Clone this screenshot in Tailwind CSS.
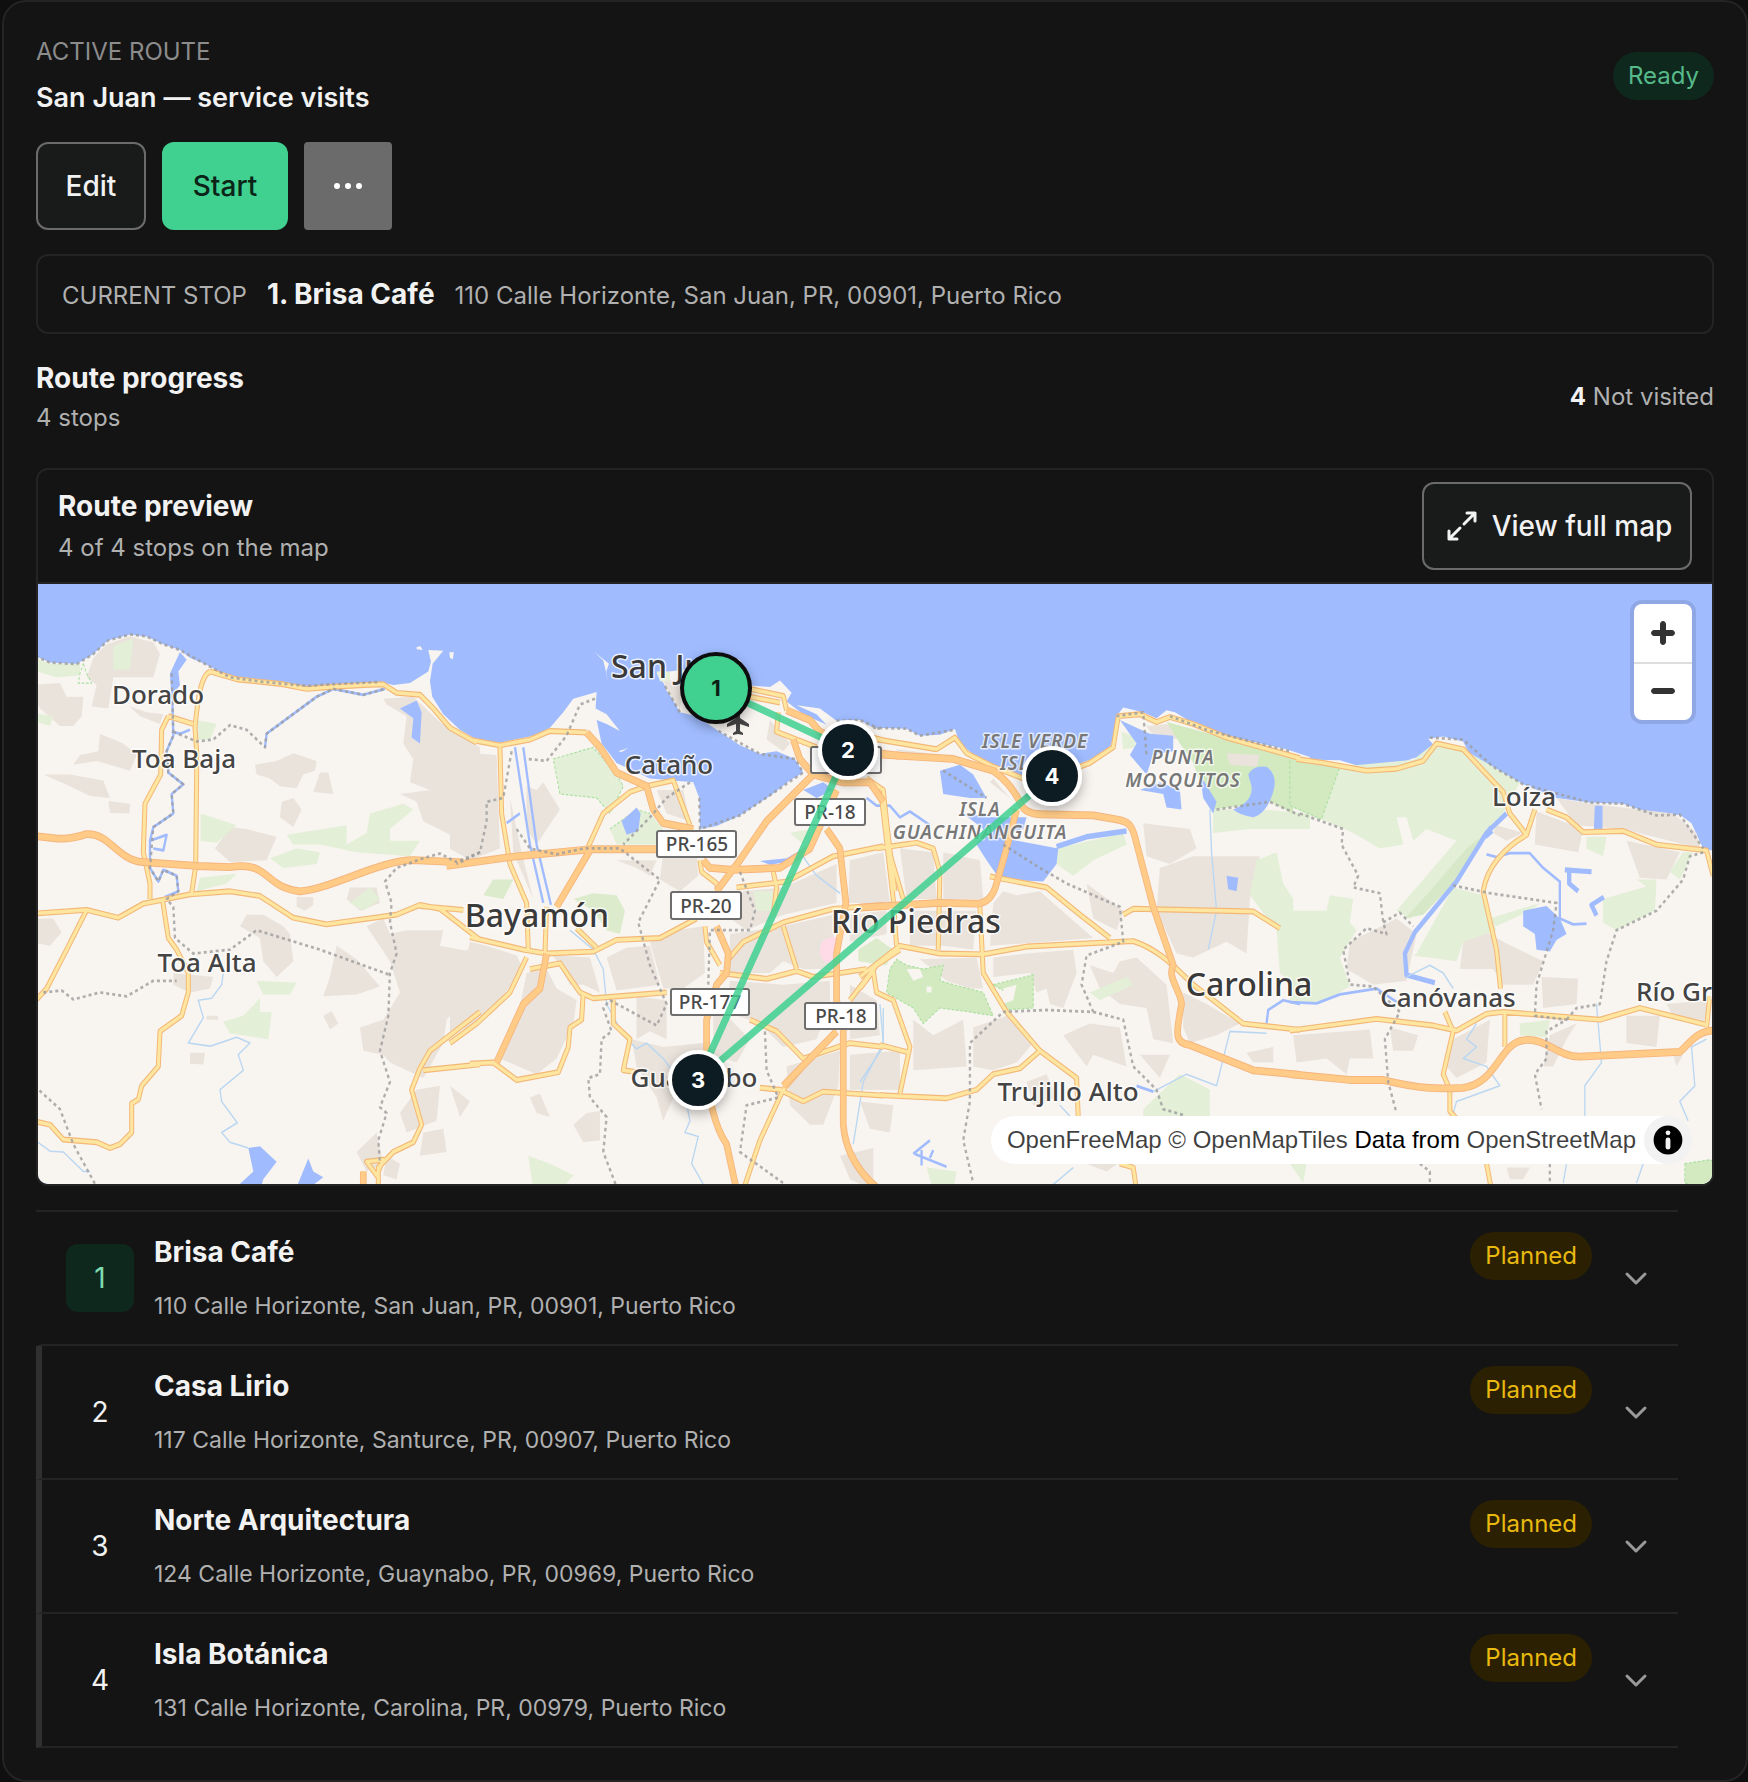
<!DOCTYPE html>
<html lang="en">
<head>
<meta charset="utf-8">
<meta name="viewport" content="width=device-width, initial-scale=1">
<title>San Juan — service visits</title>
<script src="https://cdn.jsdelivr.net/npm/@tailwindcss/browser@4"></script>
</head>
<body class="bg-[#0f0f0f] pl-[2px] font-['Inter','Liberation_Sans',sans-serif] text-[#f2f2f2]">
<main class="rounded-3xl border-2 border-[#242424] bg-[#141414] px-8 pt-[34px] pb-8">

  <header class="flex items-center justify-between">
    <div>
      <p class="text-[24px] leading-8 text-[#8c8c8c]">ACTIVE ROUTE</p>
      <h1 class="mt-3 text-[27px] leading-9 font-semibold">San Juan — service visits</h1>
    </div>
    <span class="rounded-full bg-[#0f281d] px-[15px] text-[24px] leading-[48px] text-[#56b98a]">Ready</span>
  </header>

  <div class="mt-[26px] flex gap-4">
    <button type="button" class="h-[88px] w-[110px] rounded-xl border-2 border-[#6b6b6b] bg-[#191b1b] text-[28px] font-medium">Edit</button>
    <button type="button" class="h-[88px] w-[126px] rounded-xl bg-[#40d090] text-[28px] font-medium text-[#0b2417]">Start</button>
    <button type="button" aria-label="More actions" class="flex size-[88px] items-center justify-center rounded bg-[#6b6b6b]">
      <svg class="h-2 w-7" viewBox="0 0 28 8" fill="#fff"><circle cx="3" cy="4" r="3"/><circle cx="14" cy="4" r="3"/><circle cx="25" cy="4" r="3"/></svg>
    </button>
  </div>

  <section aria-label="Current stop" class="mt-6 flex h-20 items-center rounded-xl border-2 border-[#242424] px-6">
    <div class="flex items-baseline gap-5">
      <span class="text-[24px] leading-8 text-[#b0b0b0]">CURRENT STOP</span>
      <strong class="text-[28px] leading-9 font-bold">1. Brisa Café</strong>
      <span class="text-[24px] leading-8 text-[#b0b0b0]">110 Calle Horizonte, San Juan, PR, 00901, Puerto Rico</span>
    </div>
  </section>

  <section class="mt-[26px] flex items-center justify-between">
    <div>
      <h2 class="text-[28px] leading-9 font-bold">Route progress</h2>
      <p class="mt-1.5 text-[24px] leading-8 text-[#b0b0b0]">4 stops</p>
    </div>
    <p class="text-[24px] leading-8 text-[#b0b0b0]"><strong class="font-bold text-[#f2f2f2]">4</strong> Not visited</p>
  </section>

  <section class="mt-[34px] overflow-hidden rounded-xl border-2 border-[#242424]">
    <div class="flex items-center justify-between border-b-2 border-[#242424] px-5 py-3">
      <div>
        <h2 class="text-[28px] leading-9 font-bold">Route preview</h2>
        <p class="mt-2 text-[24px] leading-8 text-[#b0b0b0]">4 of 4 stops on the map</p>
      </div>
      <button type="button" class="flex h-[88px] w-[270px] items-center justify-center gap-3.5 rounded-xl border-2 border-[#6b6b6b] bg-[#191b1b] pl-1 text-[28px] font-medium">
        <svg class="size-8" viewBox="0 0 32 32" fill="none" stroke="#f2f2f2" stroke-width="3" stroke-linecap="round" stroke-linejoin="round"><path d="M21 3h8v8M29 3 18 14M11 29H3v-8M3 29l11-11"/></svg>
        View full map
      </button>
    </div>

    <div class="relative h-[600px] overflow-hidden bg-[#a0bcff]">
      <svg class="block h-full w-full" viewBox="0 0 1674 600" preserveAspectRatio="xMidYMid slice" role="img" aria-label="Route map around San Juan">
        <defs>
          <filter id="markerShadow" x="-50%" y="-50%" width="200%" height="200%"><feDropShadow dx="0" dy="4" stdDeviation="6" flood-color="#000" flood-opacity=".3"/></filter>
          <g id="highways">
            <g>
              <path d="M0,658C60,658 90,676 170,653C240,650 260,720 340,725L500,735 600,738C720,720 700,790 810,800C900,795 1050,720 1150,720L1300,726"/>
              <path d="M1000,1520V1568"/>
            </g>
            <g transform="translate(1260 0)">
              <path d="M-10,735 200,710 420,692 620,692M410,392 450,430 500,495 590,530 610,590 640,625 730,640M320,840 420,695M290,960 270,1050 220,1090 140,1240"/>
              <path d="M1090,500 950,620 870,720 800,800M760,720 780,740 850,745 990,740 1080,690 1160,540M1010,335 1080,360 1110,390 1240,440 1350,452M1030,410 1050,460 1090,500 1180,520 1260,520 1300,570"/>
              <path d="M1130,640 1170,690 1188,830 1160,960 1160,1080 1180,1150 1180,1400Q1190,1500 1290,1568M800,890 835,960 830,1010 800,1040 770,1130 770,1230Q775,1380 830,1450L860,1568M1160,1160 1000,1300"/>
            </g>
            <g transform="translate(2490 0)">
              <path d="M50,448 280,460 400,490Q450,520 480,570 490,600 540,602L700,605C790,620 810,610 825,660L880,840 940,990C920,1020 965,1060 965,1090C950,1160 940,1190 990,1195L1180,1260 1320,1272"/>
              <path d="M470,590 440,690 410,780Q395,830 350,832L240,830 0,842"/>
            </g>
            <g transform="translate(3780 0)">
              <path d="M0,1270 180,1285 280,1285C400,1310 450,1308 520,1305C620,1295 630,1190 700,1183C770,1175 800,1225 870,1225L1170,1213C1200,1190 1220,1160 1270,1158"/>
            </g>
          </g>
          <g id="roads">
            <g>
              <path d="M540,235C515,245 505,290 495,380L500,440 500,500 497,735 485,805M540,235 620,255 760,268 830,280 900,275 1000,270 1060,268 1100,290 1170,295 1210,330 1260,380 1340,418"/>
              <path d="M0,858 170,848 265,868 340,832 480,808 600,800 690,812 790,868 890,885 1100,860 1170,835 1230,845 1290,885 1350,925M1170,838 1300,848M415,350 490,370M415,350 395,385 392,500 345,575 340,700 360,780 360,820"/>
              <path d="M170,848 110,950 50,1050 20,1078M398,825 415,920 440,950 475,1010 475,1060 455,1120 390,1160 385,1250 335,1300 325,1335 305,1345 305,1420 270,1450 240,1460 200,1445 100,1438 60,1400 0,1388"/>
              <path d="M1350,1110 1200,1210 1170,1255 1145,1310 1175,1400 1150,1445 1090,1470 1045,1510 1045,1568M1180,1260 1350,1245M1010,1495 1060,1490 1040,1530Z"/>
            </g>
            <g transform="translate(1260 0)">
              <path d="M70,412 150,425 240,410 300,388 410,392M150,430 155,600 180,730 230,830 235,950M410,695 460,600 540,545 590,530 670,515 720,630M60,918 220,950 290,960 430,955 500,925 630,920 740,870"/>
              <path d="M290,840 285,960M380,895 440,945M230,970 180,1060 80,1140 0,1190M240,1000 330,985 390,1060 430,1075 650,1060M400,1060 395,1130 360,1150 355,1200 325,1265 200,1285 130,1240 60,1243"/>
              <path d="M490,1080 490,1140 540,1180 520,1260 560,1265M750,720 755,750 800,780 805,810M860,790 1010,775 1150,710 1300,684M765,890 770,930 810,990M830,980 880,930 1000,880 1150,845 1300,835M970,750 980,790 970,860M1000,890 1040,1000"/>
              <path d="M810,1010 950,1025 1040,1005 1090,1020 1250,1000M900,1130 980,1160 1060,1230 1200,1190 1300,1200M930,1305 990,1310 1060,1340 1120,1315 1300,1325M1090,1220 1000,1310 930,1440 880,1568M1250,510 1300,540 1310,620 1335,800M1200,1080 1280,990 1350,950"/>
              <path d="M1270,405 1300,412M900,280 1000,298 1010,335M900,300 990,315M985,340 980,390 1100,430"/>
            </g>
            <g transform="translate(2490 0)">
              <path d="M40,408 230,435 285,405 320,445 400,480 490,510 600,500 690,470 760,430 775,350 840,345 890,365 930,352 1000,370 1100,405 1320,458M20,510 65,560 100,820 110,940M85,690 130,820M50,690 170,675 220,690 240,750 235,950"/>
              <path d="M390,762 560,790 660,860 750,920M360,840 370,1010 440,1110 540,1210 650,1280 655,1378M0,1020 120,940 240,960 370,962 500,942 820,928C900,950 950,1000 1000,1040L1150,1140 1320,1156"/>
              <path d="M790,860 820,845 1180,852 1260,895M540,1210 480,1255 400,1270 350,1310 260,1332 60,1324M60,1195 150,1215M0,1050 40,1005 50,1060 100,1080 150,1200 120,1320M780,1500 820,1510 830,1568"/>
            </g>
            <g transform="translate(3780 0)">
              <path d="M20,460 100,470 230,490 320,485 400,465 440,420 520,435 640,545 660,600 710,655M735,590 710,655C640,690 590,740 580,800L620,950 632,1050M770,590 830,610 880,648 1000,645 1100,680 1250,695 1270,760"/>
              <path d="M0,1158 200,1135 260,1128 430,1145 500,1158 590,1115 640,1110 930,1130 1050,1100 1250,1143M645,1110 645,1200M465,1110 490,1160 460,1270 480,1310 480,1365 500,1385M1250,1150 1260,1070M590,1500 605,1568"/>
            </g>
          </g>
        </defs>

        <!-- survey grid: geometry units are a third of a pixel wide -->
        <g transform="translate(-8 -4) scale(.3333 .3891)" stroke-linejoin="round">
          <!-- land -->
          <g fill="#f8f4f0">
            <path d="M0,190 60,212 140,216 190,190 235,155 300,140 350,145 400,165 450,180 480,200 530,218 600,250 700,262 830,275 900,270 1050,262 1090,270 1140,265 1195,235 1203,210 1195,180 1240,182 1208,215 1200,260 1207,300 1240,345 1290,385 1350,415V1568H0ZM1160,172l12,-2 6,10-18,-2ZM1258,186l14,0-4,18-8,-4Z"/>
            <path transform="translate(1260 0)" d="M0,378 70,410 150,418 250,400 300,380 340,340 370,305 440,288 437,330 470,345 510,388 470,370 440,360 455,420 500,470 600,510 730,520 748,560 750,640 800,632 870,605 960,555 1020,515 1060,495 1035,460 980,440 930,447 870,425 800,385 740,350 690,340 670,310 640,265 620,240 700,230 880,270 960,275 990,258 1025,290 1010,312 1060,345 1130,372 1100,345 1040,322 1110,330 1160,362 1230,360 1270,380 1350,383V1568H0ZM432,184l20,14 25,17-8,20 5,30-6,-30-8,-28ZM505,440l30,-8-20,10Z"/>
            <path transform="translate(2490 0)" d="M20,372 40,380 140,382 180,400 240,398 285,383 300,420 350,455 420,485 490,505 600,490 690,462 750,430 765,395 770,350 790,328 850,340 890,355 920,335 945,340 980,358 1050,388 1150,410 1280,435 1350,455V1568H0Z"/>
            <path transform="translate(3780 0)" d="M0,450 80,462 150,463 220,482 300,480 370,458 420,450 432,425 415,408 460,402 520,415 540,450 610,485 700,525 800,560 900,572 1000,575 1100,605 1170,603 1205,625 1240,690 1290,700V1568H0Z"/>
          </g>
          <!-- built-up areas -->
          <g fill="#eae3dc">
            <path d="M230,165 300,145 370,160 390,190 370,250 250,250 235,330 185,325 200,270 170,250 190,200ZM0,270 90,265 110,300 160,300 155,350 130,375 90,375 30,330ZM210,395 280,420 320,450 300,490 200,465 130,475 150,450 205,440ZM40,500 120,500 220,515 240,560 180,555 120,530ZM235,568 300,575 298,600 240,598ZM300,325 350,340 400,345 390,370 330,350ZM675,475 740,465 790,445 860,465 855,490 820,500 800,535 750,530 720,510 680,500ZM870,495 895,495 910,550 850,545ZM755,570 790,560 815,590 790,635 750,610ZM600,635 650,640 740,660 710,720 600,725 555,690Z"/>
            <path d="M1060,305 1150,300 1230,365 1350,430V700L1250,650 1180,620 1160,570 1110,550 1200,540 1140,520 1150,460 1120,420 1130,350 1070,320ZM650,860 700,860 760,890 780,910 790,980 740,1020 700,980 690,920 630,890ZM920,940 980,975 1050,1045 980,1065 880,1070 900,1020ZM1010,890 1060,870 1080,910 1130,900 1240,900 1230,940 1350,960V1100L1290,1090 1250,1130 1240,1190 1180,1280 1080,1240 1060,1220 1000,1210 990,1150 1060,1130 1110,1060 1080,980ZM880,1120 905,1108 925,1140 900,1155ZM1160,1310 1230,1300 1220,1390 1130,1420 1110,1370ZM1180,1420 1240,1410 1250,1470 1170,1480ZM0,870 70,870 95,905 60,940 0,930ZM430,1010 550,1020 540,1050 480,1060 430,1040ZM480,1215 525,1215 520,1245 480,1243ZM980,1470 1040,1420 1060,1500 1010,1520ZM960,790 1040,790 1050,830 990,850 950,820ZM1070,1480 1110,1500 1100,1540 1060,1530ZM530,1120h34v10h-34ZM800,815h50v20l-25,15-25,-10Z"/>
            <g transform="translate(1260 0)">
              <path d="M0,440 140,450 150,690 60,720 0,690ZM60,930 110,940 200,965 220,1000 150,1080 60,1150 0,1160ZM230,1010 290,1000 320,1050 380,1080 370,1140 320,1230 260,1270 150,1230 200,1140ZM310,965 420,970 450,1060 400,1040 360,1040ZM470,970 530,945 600,940 630,1040 500,1055ZM600,930 680,900 760,890 765,1010 700,1050 640,1050 620,990ZM840,910 1000,890 1150,860 1155,1000 1060,1000 1000,980 960,1010 840,1010ZM880,800 1000,790 1160,730 1160,830 1000,860 890,900 840,870ZM1200,720 1300,700 1320,830 1195,830Z"/>
              <path d="M840,1030 1000,1040 1140,1030 1140,1090 1100,1180 1000,1200 930,1140 830,1110ZM1010,1250 1090,1230 1170,1210 1165,1300 1120,1400 1080,1400 1020,1350ZM1200,1220 1350,1210V1310H1200ZM560,1070 650,1080 650,1180 600,1160 560,1180ZM545,1180 640,1200 760,1190 750,1300 680,1310 640,1390 620,1330 560,1250ZM370,1400 410,1370 450,1365V1440L400,1445ZM240,1330 270,1320 300,1380 260,1370ZM640,250 700,270 690,330 650,285ZM960,360 1020,420 1000,440 950,410ZM230,530 260,540 280,520 330,590 260,680 230,640ZM1170,1480 1270,1460V1568L1200,1540ZM620,540 700,540 720,620 650,600ZM0,1300 60,1340 30,1380ZM500,720 620,720 600,760 560,740ZM1200,1040 1280,1080 1290,1170 1200,1180ZM1200,860 1310,850V910L1200,930ZM0,960 60,950V1140L0,1160ZM790,1080 830,1120 900,1180 860,1240 790,1220ZM640,700 740,700 745,760 690,800 630,770ZM180,560 215,700 250,820 190,700Z"/>
            </g>
            <g transform="translate(2490 0)">
              <path d="M110,435 250,450 240,465 110,450ZM120,690 220,700 230,820 140,820ZM250,700 360,720 370,820 250,820ZM150,850 350,850 340,950 250,940 150,940ZM430,800 470,810 540,800 620,860 700,920 560,930 390,940 400,830ZM180,975 350,970 370,1050 330,1050 260,1030ZM400,970 500,960 640,950 650,1010 610,1100 570,1090 560,1050 530,1060 510,1010 400,1020ZM680,780 790,850 770,900 700,870ZM850,625 990,640 1010,690 930,730 860,710ZM900,740 1000,710 1200,710 1170,820 1160,960 1100,930 1000,970 950,960 890,850ZM690,990 760,1010 780,980 830,970 920,1040 940,1190 880,1180 860,1100 780,1090 720,1050Z"/>
              <path d="M160,1130 220,1170 310,1130 320,1250 160,1260ZM340,1150 440,1120 520,1190 470,1240 400,1260 340,1250ZM610,1170 690,1140 780,1150 800,1250 700,1220 680,1250ZM20,1240 120,1230V1310H20ZM0,1340 100,1350 90,1420 30,1410ZM860,375 930,370 1010,400 960,410 880,400ZM970,1060 1040,1090 1140,1140 1070,1170 990,1190 970,1150ZM740,1450 790,1490 740,1520 680,1500ZM1160,1215 1240,1200 1240,1240 1180,1240ZM400,510 450,560 390,520ZM840,1220 930,1220 900,1280ZM500,1290 560,1270 590,1330 520,1350Z"/>
            </g>
            <g transform="translate(3780 0)">
              <path d="M740,595 880,640 865,700 735,680ZM800,560 900,575 1150,600 1220,650 1230,690 1000,640 860,630ZM1010,670 1170,700 1130,770 1050,765ZM520,930 570,895 640,930 760,980 730,1040 640,1040 610,1000 510,1000ZM180,930 250,900 320,870 380,910 350,1030 250,1040 170,1000ZM755,1020 865,1025 860,1090 760,1100ZM10,1170 240,1155 250,1230 180,1230 170,1270 110,1230 20,1240ZM300,1150 385,1170 370,1210 310,1210ZM490,1180 600,1130 590,1240 500,1280 470,1250ZM1010,1120 1110,1120 1100,1200 1010,1190ZM620,630 700,650 650,670 610,650ZM780,1170 860,1140 830,1180 790,1250 760,1250ZM1130,1090 1260,1080 1240,1140 1150,1120ZM650,1510 720,1510 700,1540 660,1540ZM1150,1220h30l-20,30Z"/>
            </g>
          </g>
          <!-- vegetation -->
          <g fill="#e3efd6">
            <path d="M0,195 60,215 150,215 150,245 80,250 0,230ZM250,170 310,150 300,230 250,230ZM500,360 560,370 540,410 500,410ZM512,600 620,630 560,675 512,670ZM720,715 800,690 870,700 860,730 760,740ZM770,655 950,630 950,680 1010,650 1020,600 1120,575 1150,590 1080,640 1080,670 1170,670 1140,710 980,700 870,680 790,680ZM510,765 620,755 590,780 500,800ZM680,1030 800,1035 780,1065 700,1065ZM580,1135 640,1120 690,1075 690,1110 725,1110 715,1180 600,1165ZM960,830 1020,790 1050,820 1000,850ZM0,340 70,350 60,375 0,360Z"/>
            <g transform="translate(1260 0)"><path d="M310,460 430,430 500,500 520,530 480,600 440,560 330,550ZM480,640 560,590 600,600 640,640 620,680 500,680ZM235,1480 300,1500 370,1530 340,1560 250,1568ZM910,800 970,800 970,850 920,850ZM1020,650 1080,640 1060,680ZM620,235h40v25h-30Z"/></g>
            <g transform="translate(2490 0)"><path d="M1060,590 1200,590 1350,600V640L1170,640 1060,650ZM590,690 790,650 800,680 700,720 640,760 590,730ZM1190,720 1250,700 1270,780 1300,820V1040L1260,1010 1250,900 1170,810ZM690,1060 800,1020 820,1040 720,1080ZM850,1360 960,1270 1050,1310 1050,1378H850ZM200,1510 290,1520 280,1568H220ZM785,390 820,400 830,430 790,435Z"/></g>
            <g transform="translate(3780 0)"><path d="M150,480 370,462 440,415 530,440 690,520 640,600 500,770 360,870 320,850 500,670 410,640 370,670 350,610 320,610 340,680 270,690 190,650 95,615ZM380,960 490,790 580,810 620,900 520,930 500,980 370,965ZM0,850 110,850 120,810 190,820 180,880 200,900 150,970 180,1045 90,1090 0,1080ZM600,870 750,830 720,850 620,890ZM940,820 1100,780 1095,850 980,900 940,880ZM1180,700 1210,700 1170,770 1140,750ZM890,660 950,660 940,710 890,690ZM690,1140 780,1130 770,1175 690,1170ZM0,1500 50,1500 40,1550ZM1040,770h60l-10,30Z"/></g>
          </g>
          <g fill="#d3eac0" stroke="#a9e0a0" stroke-width="3" stroke-dasharray="8 5">
            <path d="M160,215 170,240 185,265 145,265 150,240Z" fill="none"/>
            <g transform="translate(1260 0)"><path fill="none" d="M310,460 430,430 500,500 520,530 480,600 440,560 330,550ZM480,640 560,590 600,600"/><path stroke="none" fill="#dcebcb" d="M100,810 130,770 190,770 160,820ZM370,820 430,805 500,810 525,850 510,910 470,900 430,850ZM1225,950 1280,920 1330,950 1310,990 1225,980Z"/></g>
            <g transform="translate(2490 0)"><path d="M80,1060 90,1000 110,975 140,990 190,1000 250,990 240,1030 280,1040 370,1060 400,1120 330,1110 240,1100 190,1140 160,1100ZM400,1040 520,1015 520,1100 430,1105 440,1060Z"/><path stroke="none" d="M920,365 1050,395 1200,425 1300,450V600L1230,570 1060,590 1020,520 1000,470 960,420Z"/></g>
            <g transform="translate(3780 0)"><path d="M0,455 150,480 95,615 0,580ZM1185,1500 1260,1490 1290,1500V1568L1185,1550Z"/><path stroke="none" fill="#d7e8c9" d="M345,870 420,800 530,690 590,650 490,780 400,860Z"/></g>
          </g>
          <g fill="#f8f4f0"><path transform="translate(2490 0)" d="M140,1000l40,0 10,20-30,10ZM430,1050l40,-10-10,40-30,10ZM200,1045l15,0 0,15-15,0Z"/><path fill="#eae3dc" transform="translate(2490 0)" d="M1100,445 1200,450 1190,480 1110,475Z"/></g>
          <path fill="#ffdbe8" transform="translate(1260 0)" d="M1160,918C1095,910 1095,990 1150,985Z"/>
          <!-- water -->
          <g fill="#a0bcff">
            <path d="M1110,330 1160,310 1175,340 1170,420 1145,405 1150,355ZM655,1460 690,1455 740,1495 700,1540 690,1568H610L670,1520ZM835,1487 850,1520 880,1535 830,1568 800,1560ZM450,185 470,205 445,235 450,270 425,300 420,240Z"/>
            <g transform="translate(1260 0)"><path d="M515,620 560,585 572,600 565,645 530,655ZM1060,540 1120,520 1150,540 1100,560ZM930,722 1010,715 1060,690 1040,720 960,732Z"/></g>
            <g transform="translate(2490 0)"><path d="M240,490 300,475 340,500 380,560 330,560 250,550ZM310,600 400,610 500,610 490,640 410,660 595,690 590,730 550,775 420,770 380,720 350,680 370,640ZM780,360 830,380 870,395 940,400V440L880,450 860,500 810,450 830,420ZM840,540 900,520 960,540 965,590 920,585 910,550ZM1165,500Q1180,475 1220,480 1255,500 1240,545 1220,600 1180,610 1140,605 1120,590 1180,570 1175,530ZM1020,500 1070,570 1060,600 1030,560ZM1100,760 1135,765 1130,800 1105,795Z"/></g>
            <g transform="translate(3780 0)"><path d="M700,850 770,838 810,870 830,910 800,925 780,955 740,950 735,910 700,890ZM915,580H938V642H912ZM575,660 600,630 610,650 590,665Z"/></g>
          </g>
          <g fill="none" stroke="#a0bcff" stroke-width="7">
            <path d="M425,240 430,400 410,440 415,495 460,525 425,550 430,600 370,635 360,670 410,655 400,695 370,690M360,670V740L385,775 400,745 440,760 445,800 405,815M425,390 450,395 480,385M705,430 710,395 860,300 910,280 1000,295 1065,280"/>
            <g transform="translate(1260 0)"><path d="M195,430 240,680 280,830M220,430 260,680 303,835M210,600 170,625"/></g>
            <g transform="translate(2490 0)"><path d="M20,560 50,580 90,580 120,610 150,595 210,630M1220,1140 1225,1105 1270,1080 1320,1090M830,1300 880,1315M160,1475 210,1440M165,1475 260,1508M185,1465V1505M210,1485 220,1465"/><path stroke-width="14" d="M590,685 680,660 800,645"/></g>
            <g transform="translate(3780 0)"><path d="M590,705 620,712 660,702H720L760,740 810,775V870L850,885 890,883M0,1085 80,1088 150,1065 260,1050 330,1090"/><path stroke-width="13" d="M650,600 590,650 500,775 375,905 345,960 350,1015 435,1035M825,745 905,750M838,750V780L865,800M942,815 905,835 920,862"/></g>
          </g>
          <g fill="none" stroke="#bad7f2" stroke-width="4">
            <path d="M580,1010 575,1040 545,1075 505,1080 520,1125 475,1190 540,1198 620,1175 660,1190 625,1220 640,1260 570,1310 575,1340 622,1395 575,1420 600,1445 655,1460M0,1430 60,1468 100,1470 160,1520 180,1520"/>
            <g transform="translate(1260 0)"><path d="M360,900 430,950 460,1000 470,1090 520,1170 560,1205 590,1190 640,1230 700,1300 720,1390 705,1420 745,1430 725,1500 770,1568M1050,700 1100,760 1170,805M1290,1090 1300,1190 1240,1290 1210,1450"/></g>
            <g transform="translate(2490 0)"><path d="M1050,590 1055,700 1070,850 1045,950M70,1100V1200L0,1290M880,1315 980,1270 1070,1300 1110,1160 1220,1165M560,1568 640,1510M600,1350 630,1378"/></g>
            <g transform="translate(3780 0)"><path d="M350,1020 420,990 460,1010 490,1050M560,1140 530,1180 560,1200 520,1230 590,1250 630,1300 500,1340 490,1370M920,1090 935,1240 885,1300V1378M1250,1180 1205,1200 1215,1300 1170,1340 1195,1390M820,1550 830,1500M1040,1550 1060,1500"/></g>
          </g>
          <!-- roads: casing, then fill -->
          <use href="#roads" fill="none" stroke="#f2b878" stroke-width="15"/>
          <use href="#roads" fill="none" stroke="#ffe6a0" stroke-width="9"/>
          <use href="#highways" fill="none" stroke="#f5b57c" stroke-width="20"/>
          <use href="#highways" fill="none" stroke="#ffcb87" stroke-width="15"/>
          <!-- municipal boundaries -->
          <g fill="none" stroke="#9c9c9c" stroke-opacity=".8" stroke-width="7" stroke-dasharray="9 9">
            <path d="M0,190 60,212 140,216 190,190 235,155 300,140 350,145 400,165 450,180 530,218 600,250 700,262 830,272 900,268 1050,262M425,240 430,400 410,440 415,495 460,525 425,550 430,600 370,635 360,740 385,775 400,745 440,760 445,800 410,820 430,840 435,920 490,960 600,950 680,900 870,950 1080,1015M430,390 500,415 550,410 600,373 650,385 705,430 710,395 860,300 910,280 1000,295 1065,280"/>
            <path d="M40,1060 95,1055 130,1078 210,1060 290,1070 370,1030 440,1030M0,1290 90,1360 130,1450 200,1560M1350,700 1280,725 1230,703 1180,715 1100,740 1065,775 1085,830 1080,880 1100,960 1080,1010 1075,1120 1050,1210 1080,1290 1050,1355 1070,1370 1045,1440 1050,1500"/>
            <g transform="translate(1260 0)"><path d="M435,305 390,320 350,400 290,465 235,460M185,440 160,560 110,570V620L90,700 20,730M200,640 240,690 320,705 400,690 510,690 630,770 565,880 600,990 650,1090 620,1145 480,1080 460,1100 485,1160 455,1180 450,1270 415,1280 420,1330 470,1380 460,1470 500,1560M720,520 650,560 600,610 520,680M870,750 915,850 900,900 780,900 775,1040M945,1160 950,1260 985,1330 890,1350 870,1470 1000,1550M748,560 750,640 870,605 1060,495 1035,460 930,447 800,385M690,340 640,265M1160,362 1230,360 1290,383"/></g>
            <g transform="translate(2490 0)"><path d="M40,380 140,382 180,400 285,385M250,490 380,560M430,680 540,740 620,780 780,840 790,930 680,965 665,1040 700,1110 560,1105 430,1110 330,1190V1340L310,1440 340,1550M700,1110 790,1130 820,1250 890,1310 910,1360 970,1375M1070,590 1230,570 1320,605M770,350 850,340 860,450M930,350 1050,388 1290,440"/></g>
            <g transform="translate(3780 0)"><path d="M30,600 160,640 155,680 205,760 190,790 270,805 280,880 290,910 230,895 160,950 180,1040 250,1045 330,1110 285,1180 295,1290 320,1370M280,880 330,855 370,890M490,785 600,805 800,830 790,900 740,1040 735,1120 830,1130 770,1160V1230L735,1270 755,1360M1240,700 1200,710 1180,770 1100,850 980,900 950,980 930,1090 860,1100 830,1130M420,405 520,410 610,480 700,525 900,572 1000,575 1100,605 1170,603 1240,690M390,1500 420,1520V1560M780,1500V1560"/></g>
          </g>
        </g>

        <!-- airport -->
        <path transform="translate(700 138)" fill="#444" d="M-2-10a2 2 0 0 1 4 0v6l9 6v3l-9-3v7l3 2v2l-5-1-5 1v-2l3-2v-7l-9 3v-3l9-6Z"/>
        <!-- road shields -->
        <g fill="#fff" stroke="#6e6e6e" stroke-width="2">
          <rect x="619" y="247" width="79" height="26" rx="2"/><rect x="633" y="308" width="70" height="27" rx="2"/><rect x="633" y="405" width="78" height="26" rx="2"/><rect x="767" y="419" width="71" height="26" rx="2"/><rect x="757" y="215" width="70" height="26" rx="2"/><rect x="773" y="163" width="70" height="26" rx="2"/>
        </g>
        <g class="font-['Noto_Sans',sans-serif] text-[19px] font-medium" fill="#4a4a4a" text-anchor="middle">
          <text x="659" y="267">PR-165</text><text x="668" y="329">PR-20</text><text x="672" y="425">PR-177</text><text x="803" y="439">PR-18</text><text x="792" y="235">PR-18</text>
        </g>
        <!-- place names -->
        <g class="font-['Noto_Sans',sans-serif] text-[26px] font-medium [paint-order:stroke]" fill="#444" stroke="#fff" stroke-opacity=".8" stroke-width="3" stroke-linejoin="round" text-anchor="middle">
          <text x="120" y="120">Dorado</text><text x="146" y="184">Toa Baja</text><text x="169" y="388">Toa Alta</text><text x="631" y="190">Cataño</text><text x="656" y="503">Guaynabo</text><text x="1030" y="517">Trujillo Alto</text><text x="1410" y="423">Canóvanas</text><text x="1486" y="222">Loíza</text><text x="1598" y="417" text-anchor="start">Río Grande</text>
        </g>
        <g class="font-['Noto_Sans',sans-serif] text-[32px] font-medium [paint-order:stroke]" fill="#3a3a3a" stroke="#fff" stroke-opacity=".8" stroke-width="3" stroke-linejoin="round" text-anchor="middle">
          <text x="573" y="94" text-anchor="start">San Juan</text><text x="499" y="343">Bayamón</text><text x="878" y="349">Río Piedras</text><text x="1211" y="412">Carolina</text>
        </g>
        <g class="font-['Noto_Sans',sans-serif] text-[19px] font-semibold italic tracking-wider [paint-order:stroke]" fill="#787878" stroke="#fff" stroke-opacity=".7" stroke-width="3" stroke-linejoin="round" text-anchor="middle">
          <text x="997" y="164">ISLE VERDE</text><text x="962" y="186" text-anchor="start">ISL</text><text x="942" y="232">ISLA</text><text x="942" y="255">GUACHINANGUITA</text><text x="1145" y="180">PUNTA</text><text x="1145" y="203">MOSQUITOS</text>
        </g>
        <!-- route and stops -->
        <path d="M678 104 810 166 660 496 1014 192" fill="none" stroke="#40d090" stroke-opacity=".85" stroke-width="7" stroke-linejoin="round"/>
        <g class="text-[22px] font-bold" text-anchor="middle">
          <g filter="url(#markerShadow)"><circle cx="678" cy="104" r="34" fill="#40d090" stroke="#111" stroke-width="4"/></g><text x="678" y="112" fill="#0b1f15">1</text>
          <g filter="url(#markerShadow)" fill="#111a22" stroke="#fff" stroke-width="4"><circle cx="810" cy="166" r="28"/><circle cx="660" cy="496" r="28"/><circle cx="1014" cy="192" r="28"/></g>
          <g fill="#fff"><text x="810" y="174">2</text><text x="660" y="504">3</text><text x="1014" y="200">4</text></g>
        </g>
      </svg>

      <div class="absolute top-5 right-5 w-[58px] overflow-hidden rounded-lg bg-white shadow-[0_0_0_4px_rgba(0,0,0,0.1)]">
        <button type="button" aria-label="Zoom in" class="block size-[58px]"><svg viewBox="0 0 29 29" fill="#333"><path d="M14.500 8.500c-.75 0-1.500.75-1.500 1.500v3h-3c-.75 0-1.500.75-1.500 1.500S9.250 16 10 16h3v3c0 .75.75 1.500 1.500 1.500S16 19.750 16 19v-3h3c.75 0 1.500-.75 1.500-1.500S19.750 13 19 13h-3v-3c0-.75-.75-1.500-1.500-1.500"/></svg></button>
        <button type="button" aria-label="Zoom out" class="block size-[58px] shadow-[inset_0_2px_0_#ddd]"><svg viewBox="0 0 29 29" fill="#333"><path d="M10 13c-.75 0-1.500.75-1.500 1.500S9.250 16 10 16h9c.75 0 1.500-.75 1.500-1.500S19.750 13 19 13z"/></svg></button>
      </div>

      <div class="absolute right-5 bottom-5 rounded-full bg-white py-1 pr-14 pl-4 font-['Liberation_Sans',Arial,sans-serif] text-[24px] leading-10 whitespace-nowrap text-black">
        <a href="#" class="text-black/75">OpenFreeMap</a> <a href="#" class="text-black/75">© OpenMapTiles</a> Data from <a href="#" class="text-black/75">OpenStreetMap</a>
        <button type="button" aria-label="Toggle attribution" class="absolute top-0 right-0 size-12 rounded-full bg-black/5"><svg viewBox="0 0 20 20" fill="#000" fill-rule="evenodd"><path d="M4 10a6 6 0 1 0 12 0 6 6 0 1 0-12 0m5-3a1 1 0 1 0 2 0 1 1 0 1 0-2 0m0 3a1 1 0 1 1 2 0v3a1 1 0 1 1-2 0"/></svg></button>
      </div>
    </div>
  </section>

  <ol class="mt-6 mr-9 border-t-2 border-[#242424]">
    <li class="flex gap-5 border-b-2 border-l-6 border-b-[#242424] border-l-transparent pt-5 pr-[18px] pb-[22px] pl-6">
      <span class="mt-3 flex size-[68px] items-center justify-center rounded-xl bg-[#0f281d] text-[28px] text-[#7fdcb1]">1</span>
      <div class="grow">
        <h3 class="text-[28px] leading-10 font-bold">Brisa Café</h3>
        <p class="mt-[18px] text-[23px] leading-8 text-[#b0b0b0]">110 Calle Horizonte, San Juan, PR, 00901, Puerto Rico</p>
      </div>
      <span class="h-12 rounded-full bg-[#2c2003] px-[15px] text-[24px] leading-[48px] text-[#e8b90f]">Planned</span>
      <button type="button" aria-label="Show Brisa Café" class="flex w-12 items-center justify-center"><svg class="size-8" viewBox="0 0 32 32" fill="none" stroke="#9a9a9a" stroke-width="3" stroke-linecap="round" stroke-linejoin="round"><path d="m7 13 9 9 9-9"/></svg></button>
    </li>
    <li class="flex gap-5 border-b-2 border-l-6 border-b-[#242424] border-l-[#303030] pt-5 pr-[18px] pb-[22px] pl-6">
      <span class="mt-3 flex size-[68px] items-center justify-center rounded-xl text-[28px]">2</span>
      <div class="grow">
        <h3 class="text-[28px] leading-10 font-bold">Casa Lirio</h3>
        <p class="mt-[18px] text-[23px] leading-8 text-[#b0b0b0]">117 Calle Horizonte, Santurce, PR, 00907, Puerto Rico</p>
      </div>
      <span class="h-12 rounded-full bg-[#2c2003] px-[15px] text-[24px] leading-[48px] text-[#e8b90f]">Planned</span>
      <button type="button" aria-label="Show Casa Lirio" class="flex w-12 items-center justify-center"><svg class="size-8" viewBox="0 0 32 32" fill="none" stroke="#9a9a9a" stroke-width="3" stroke-linecap="round" stroke-linejoin="round"><path d="m7 13 9 9 9-9"/></svg></button>
    </li>
    <li class="flex gap-5 border-b-2 border-l-6 border-b-[#242424] border-l-[#303030] pt-5 pr-[18px] pb-[22px] pl-6">
      <span class="mt-3 flex size-[68px] items-center justify-center rounded-xl text-[28px]">3</span>
      <div class="grow">
        <h3 class="text-[28px] leading-10 font-bold">Norte Arquitectura</h3>
        <p class="mt-[18px] text-[23px] leading-8 text-[#b0b0b0]">124 Calle Horizonte, Guaynabo, PR, 00969, Puerto Rico</p>
      </div>
      <span class="h-12 rounded-full bg-[#2c2003] px-[15px] text-[24px] leading-[48px] text-[#e8b90f]">Planned</span>
      <button type="button" aria-label="Show Norte Arquitectura" class="flex w-12 items-center justify-center"><svg class="size-8" viewBox="0 0 32 32" fill="none" stroke="#9a9a9a" stroke-width="3" stroke-linecap="round" stroke-linejoin="round"><path d="m7 13 9 9 9-9"/></svg></button>
    </li>
    <li class="flex gap-5 border-b-2 border-l-6 border-b-[#242424] border-l-[#303030] pt-5 pr-[18px] pb-[22px] pl-6">
      <span class="mt-3 flex size-[68px] items-center justify-center rounded-xl text-[28px]">4</span>
      <div class="grow">
        <h3 class="text-[28px] leading-10 font-bold">Isla Botánica</h3>
        <p class="mt-[18px] text-[23px] leading-8 text-[#b0b0b0]">131 Calle Horizonte, Carolina, PR, 00979, Puerto Rico</p>
      </div>
      <span class="h-12 rounded-full bg-[#2c2003] px-[15px] text-[24px] leading-[48px] text-[#e8b90f]">Planned</span>
      <button type="button" aria-label="Show Isla Botánica" class="flex w-12 items-center justify-center"><svg class="size-8" viewBox="0 0 32 32" fill="none" stroke="#9a9a9a" stroke-width="3" stroke-linecap="round" stroke-linejoin="round"><path d="m7 13 9 9 9-9"/></svg></button>
    </li>
  </ol>
</main>
</body>
</html>
